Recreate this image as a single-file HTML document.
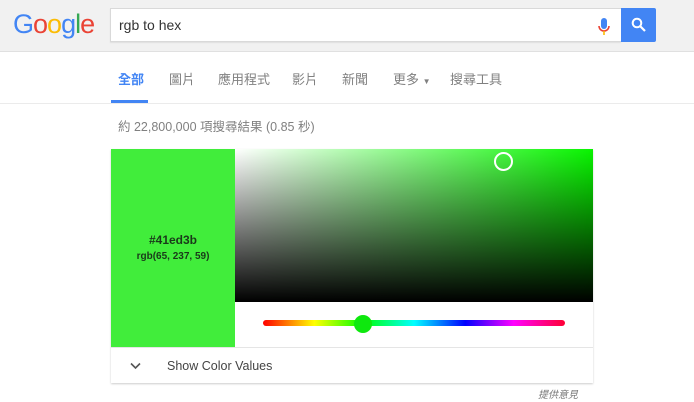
<!DOCTYPE html>
<html><head><meta charset="utf-8"><style>
*{margin:0;padding:0;box-sizing:border-box}
body{width:694px;height:402px;background:#fff;font-family:"Liberation Sans","Noto Sans CJK TC",sans-serif;position:relative;overflow:hidden}
.hdr{position:absolute;left:0;top:0;width:694px;height:52px;background:#f1f1f1;border-bottom:1px solid #e0e0e0}
.logo{position:absolute;left:13px;top:9px;font-size:27px;letter-spacing:-1px;font-family:"Liberation Sans",sans-serif}
.box{position:absolute;left:110px;top:8px;width:511px;height:34px;background:#fff;border:1px solid #d9d9d9;border-right:none;box-shadow:0 1px 1px rgba(0,0,0,.08)}
.box span{position:absolute;left:8px;top:8px;font-size:14px;color:#333}
.btn{position:absolute;left:621px;top:8px;width:35px;height:34px;background:#4285f4;border-radius:0 2px 2px 0}
.tabs{position:absolute;top:69px;font-size:13px;color:#808080}
.ul{position:absolute;left:111px;top:100px;width:37px;height:3px;background:#4285f4}
.div{position:absolute;left:0;top:103px;width:694px;height:1px;background:#ebebeb}
.res{position:absolute;left:118px;top:116px;font-size:12.5px;color:#808080}
.card{position:absolute;left:111px;top:149px;width:482px;height:234px;background:#fff;box-shadow:0 1px 2px rgba(0,0,0,.2)}
.sw{position:absolute;left:0;top:0;width:124px;height:198px;background:#41ed3b;text-align:center;color:#1a3a1a;font-weight:bold}
.grad{position:absolute;left:124px;top:0;width:358px;height:153px;background:linear-gradient(to top,#000,rgba(0,0,0,0)),linear-gradient(to right,#fff,hsl(118,100%,48%))}
.track{position:absolute;left:152px;top:171px;width:302px;height:6px;border-radius:3px;background:linear-gradient(to right,#f00,#ff0 17%,#0f0 33%,#0ff 50%,#00f 67%,#f0f 83%,#f03)}
.thumb{position:absolute;left:243px;top:166px;width:18px;height:18px;border-radius:50%;background:#0ee80e}
.row{position:absolute;left:0;top:198px;width:482px;height:36px;border-top:1px solid #e5e5e5}
</style></head><body>
<div class="hdr">
<div class="logo"><span style="color:#4285f4">G</span><span style="color:#ea4335">o</span><span style="color:#fbbc05">o</span><span style="color:#4285f4">g</span><span style="color:#34a853">l</span><span style="color:#ea4335">e</span></div>
<div class="box"><span>rgb to hex</span>
<svg style="position:absolute;left:486px;top:8px" width="14" height="20" viewBox="0 0 14 20"><rect x="4" y="1" width="6" height="11" rx="3" fill="#4285f4"/><path d="M2 9a5 5 0 0 0 10 0" stroke="#ea4335" stroke-width="1.6" fill="none"/><path d="M7 14v4" stroke="#fbbc05" stroke-width="1.6"/></svg></div>
<div class="btn"><svg style="position:absolute;left:10px;top:9px" width="16" height="16" viewBox="0 0 16 16"><circle cx="6" cy="6" r="4.3" stroke="#fff" stroke-width="2" fill="none"/><path d="M9 9l5 5" stroke="#fff" stroke-width="2.2"/></svg></div>
</div>
<div class="tabs" style="left:118px;color:#4285f4;font-weight:bold">全部</div>
<div class="tabs" style="left:169px">圖片</div>
<div class="tabs" style="left:218px">應用程式</div>
<div class="tabs" style="left:292px">影片</div>
<div class="tabs" style="left:342px">新聞</div>
<div class="tabs" style="left:393px">更多 <span style="font-size:8px">▼</span></div>
<div class="tabs" style="left:450px">搜尋工具</div>
<div class="ul"></div><div class="div"></div>
<div class="res">約 22,800,000 項搜尋結果 (0.85 秒)</div>
<div class="card">
<div class="sw"><div style="margin-top:84px;font-size:12px">#41ed3b</div><div style="margin-top:4px;font-size:10px">rgb(65, 237, 59)</div></div>
<div class="grad"></div>
<div style="position:absolute;left:383px;top:3px;width:19px;height:19px;border:2px solid #fff;border-radius:50%"></div>
<div class="track"></div><div class="thumb"></div>
<div class="row"><svg style="position:absolute;left:19px;top:14px" width="11" height="8" viewBox="0 0 11 8"><path d="M1 1.5l4.5 4.5 4.5-4.5" stroke="#555" stroke-width="1.6" fill="none"/></svg><span style="position:absolute;left:56px;top:11px;font-size:12.5px;color:#444">Show Color Values</span></div>
</div>
<div style="position:absolute;left:538px;top:386px;font-size:10px;color:#777;font-style:italic">提供意見</div>
</body></html>
